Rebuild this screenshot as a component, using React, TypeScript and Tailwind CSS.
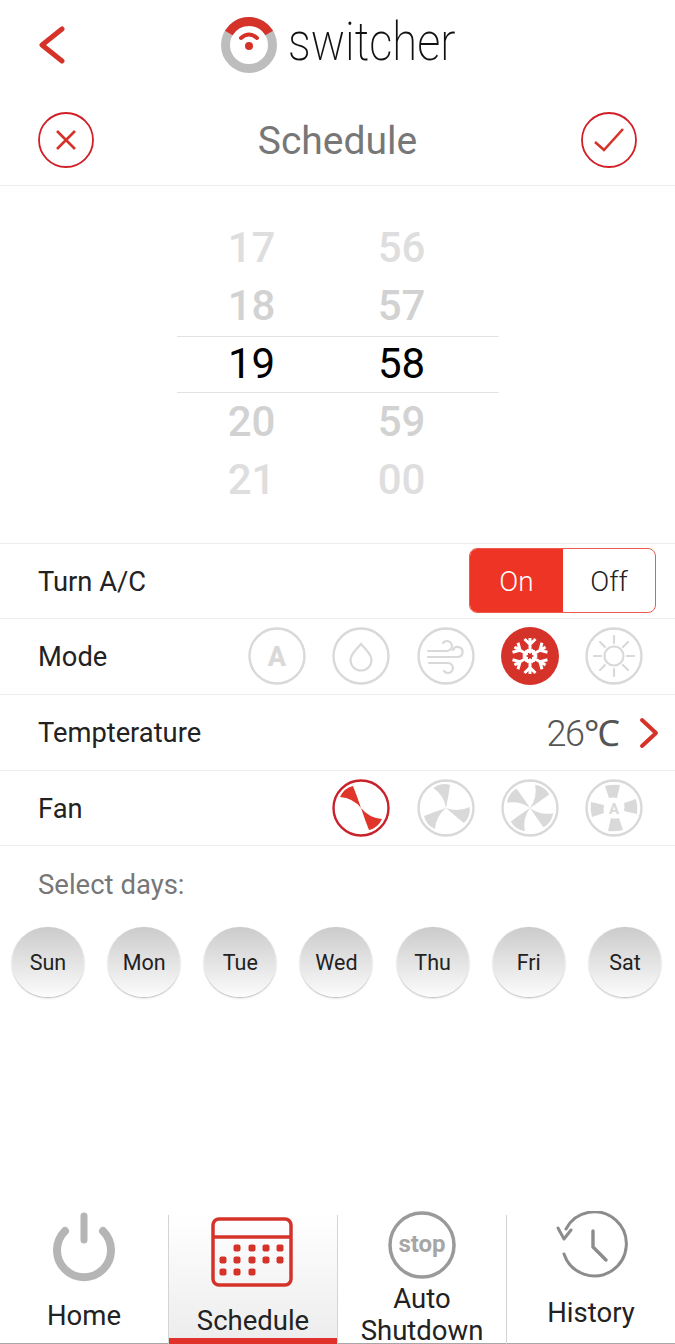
import React from "react";

const RED = "#d5332a";
const GREY = "#d9d9d9";

const blade = "M0 0 Q-4 -12 -8 -22 Q-17 -20 -21 -11 Q-8 -10 0 0Z";

function Circle({ children, stroke = GREY }: { children?: React.ReactNode; stroke?: string }) {
  return (
    <svg width="58" height="58" viewBox="0 0 58 58" fill="none">
      <circle cx="29" cy="29" r="27.5" stroke={stroke} strokeWidth="2.4" />
      {children}
    </svg>
  );
}

function Fan({ rotations, color = GREY, stroke = GREY }: { rotations: number[]; color?: string; stroke?: string }) {
  return (
    <Circle stroke={stroke}>
      <g transform="translate(29 29)" fill={color}>
        {rotations.map((r) => (
          <path key={r} d={blade} transform={`rotate(${r})`} />
        ))}
      </g>
    </Circle>
  );
}

function AutoFan() {
  return (
    <Circle>
      <g transform="translate(29 29)" fill={GREY}>
        {[0, 90, 180, 270].map((r) => (
          <path key={r} d="M-9 -22 Q-2 -24 6 -23 L3 -10 Q-1 -11 -5 -10Z" transform={`rotate(${r})`} />
        ))}
      </g>
      <text x="29" y="35" textAnchor="middle" fontFamily="Roboto" fontWeight="700" fontSize="15" fill={GREY}>A</text>
    </Circle>
  );
}

function Logo() {
  return (
    <svg width="56" height="56" viewBox="0 0 56 56" fill="none">
      <circle cx="28" cy="28" r="23.5" stroke="#bdbdbd" strokeWidth="9" />
      <path d="M7.8 16 A23.5 23.5 0 0 1 48.2 16" stroke="#d5332a" strokeWidth="9" />
      <path d="M20 21 Q28 14 36 21" stroke="#d5332a" strokeWidth="4" strokeLinecap="round" />
      <circle cx="28" cy="29" r="4" fill="#d5332a" />
    </svg>
  );
}

function BackChevron() {
  return (
    <svg width="27" height="38" viewBox="0 0 27 38" fill="none">
      <path d="M24 3 L4 19 L24 35" stroke="#d5332a" strokeWidth="5" strokeLinecap="round" strokeLinejoin="round" />
    </svg>
  );
}

function NextChevron() {
  return (
    <svg width="20" height="32" viewBox="0 0 20 32" fill="none">
      <path d="M3 3 L17 16 L3 29" stroke="#d5332a" strokeWidth="4" strokeLinecap="round" strokeLinejoin="round" />
    </svg>
  );
}

function Row({ label, children, height }: { label: string; children: React.ReactNode; height: string }) {
  return (
    <div className={`flex items-center justify-between border-b border-[#ececec] pl-[38px] ${height}`}>
      <span className="pt-[2px] text-[27.3px] text-[#222]">{label}</span>
      {children}
    </div>
  );
}

const hours = ["17", "18", "19", "20", "21"];
const mins = ["56", "57", "58", "59", "00"];
const days = ["Sun", "Mon", "Tue", "Wed", "Thu", "Fri", "Sat"];

export default function App() {
  return (
    <div className="flex h-[1344px] w-[675px] flex-col overflow-hidden bg-white font-['Roboto',sans-serif]">
      {/* brand bar */}
      <div className="grid h-[90px] grid-cols-[1fr_auto_1fr] items-center">
        <div className="pl-[38px]">
          <BackChevron />
        </div>
        <div className="flex items-center">
          <Logo />
          <span className="mb-[6px] ml-[11px] inline-block w-[167px] origin-left scale-x-[0.84] whitespace-nowrap text-[54px] font-extralight leading-none text-[#111]">
            switcher
          </span>
        </div>
        <div />
      </div>

      {/* title */}
      <div className="flex h-[96px] items-center justify-between border-b border-[#ececec] px-[38px] pt-[5px]">
        <svg width="56" height="56" viewBox="0 0 56 56" fill="none">
          <circle cx="28" cy="28" r="27" stroke="#d01f26" strokeWidth="1.8" />
          <path d="M19 19 L37 37 M37 19 L19 37" stroke="#d5332a" strokeWidth="2.6" />
        </svg>
        <span className="mt-[2px] text-[39px] text-[#777]">Schedule</span>
        <svg width="56" height="56" viewBox="0 0 56 56" fill="none">
          <circle cx="28" cy="28" r="27" stroke="#d01f26" strokeWidth="1.8" />
          <path d="M14 30 L23 38 L42 17" stroke="#d5332a" strokeWidth="2.6" />
        </svg>
      </div>

      {/* picker */}
      <div className="flex h-[358px] flex-col items-center border-b border-[#ececec] pt-[33px]">
        {hours.map((h, i) => (
          <div
            key={h}
            className={
              i === 2
                ? "mt-[1px] grid h-[57px] w-[322px] grid-cols-[150px_150px] items-center border-y border-[#e2e2e2] pb-[1px] text-[42px] font-[450] leading-none text-black"
                : `grid h-[58px] w-[322px] grid-cols-[150px_150px] items-center text-[42px] font-medium leading-none ${
                    i === 0 || i === 4 ? "text-[#dedede]" : "text-[#d2d2d2]"
                  }`
            }
          >
            <span className="text-center">{h}</span>
            <span className="text-center">{mins[i]}</span>
          </div>
        ))}
      </div>

      {/* settings */}
      <Row label="Turn A/C" height="h-[75px]">
        <div className="mb-[2px] mr-[19px] flex h-[65px] w-[187px] overflow-hidden rounded-[8px] border border-[#ee5a50]">
          <div className="flex w-[93px] items-center justify-center bg-[#ee3424] pt-[4px] text-[28px] font-light text-white">On</div>
          <div className="flex flex-1 items-center justify-center pt-[4px] text-[28px] font-light text-[#222]">Off</div>
        </div>
      </Row>
      <Row label="Mode" height="h-[76px]">
        <div className="mb-[2px] mr-[32px] flex gap-[26.25px]">
          <Circle>
            <text x="29" y="39" textAnchor="middle" fontFamily="Roboto" fontWeight="800" fontSize="27" fill={GREY}>A</text>
          </Circle>
          <Circle>
            <path d="M29 17 C24 23 18.5 27 18.5 33 A10.5 10.5 0 0 0 39.5 33 C39.5 27 34 23 29 17Z" stroke={GREY} strokeWidth="2.2" />
          </Circle>
          <Circle>
            <g stroke={GREY} strokeWidth="2.2" strokeLinecap="round">
              <path d="M11 24 H30 A5 5 0 1 0 26 16" />
              <path d="M11 30 H41 A5 5 0 1 0 36 23" />
              <path d="M12 36 H31 A5 5 0 1 1 27 44" />
            </g>
          </Circle>
          <svg width="58" height="58" viewBox="0 0 58 58" fill="none">
            <circle cx="29" cy="29" r="29" fill="#d5332a" />
            <g stroke="#fff" strokeWidth="3" transform="translate(29 29)">
              {[0, 60, 120, 180, 240, 300].map((r) => (
                <path key={r} d="M0 -4 V-18 M-5.5 -17 L0 -11.5 L5.5 -17 M-3.5 -6 L0 -4 L3.5 -6" transform={`rotate(${r})`} />
              ))}
            </g>
          </svg>
          <Circle>
            <circle cx="29" cy="29" r="9.5" stroke={GREY} strokeWidth="2.2" />
            <g stroke={GREY} strokeWidth="2.2" strokeLinecap="round">
              <path d="M29 9 V16 M29 42 V49 M9 29 H16 M42 29 H49 M15 15 L20 20 M38 38 L43 43 M15 43 L20 38 M38 20 L43 15" />
            </g>
          </Circle>
        </div>
      </Row>
      <Row label="Tempterature" height="h-[76px]">
        <div className="mr-[16px] flex items-center gap-[21px]">
          <span className="pt-[2px] text-[36px] font-light tracking-[-1.5px] text-[#555]">26℃</span>
          <NextChevron />
        </div>
      </Row>
      <Row label="Fan" height="h-[75px]">
        <div className="mr-[32px] flex gap-[26.25px]">
          <Fan rotations={[0, 180]} color="#e0352b" stroke="#c8232c" />
          <Fan rotations={[30, 150, 270]} />
          <Fan rotations={[75, 165, 255, 345]} />
          <AutoFan />
        </div>
      </Row>

      {/* days */}
      <div className="pl-[38px] pt-[24px] text-[27.5px] leading-[30px] text-[#777]">Select days:</div>
      <div className="mt-[27px] flex justify-between pl-[12px] pr-[14px]">
        {days.map((d) => (
          <div
            key={d}
            className="flex h-[70px] w-[72px] items-center justify-center rounded-full bg-gradient-to-b from-[#cbcbcb] to-[#fcfcfc] pt-[2px] text-[21.5px] text-[#222] shadow-[0_1px_2px_rgba(0,0,0,0.3)]"
          >
            {d}
          </div>
        ))}
      </div>

      <div className="flex-1" />

      {/* tabs */}
      <div className="grid h-[129px] shrink-0 grid-cols-[168px_169px_169px_1fr] border-b border-[#a8a8a8] text-[27.5px] leading-[32px] text-[#222]">
        <div className="flex flex-col items-center">
          <svg className="-mt-[5px]" width="72" height="72" viewBox="0 0 72 72" fill="none">
            <path d="M36 6 V30" stroke="#b5b5b5" strokeWidth="7" strokeLinecap="round" />
            <path d="M17 21 A27 27 0 1 0 55 21" stroke="#b5b5b5" strokeWidth="8" strokeLinecap="round" />
          </svg>
          <span className="mt-[18px]">Home</span>
        </div>
        <div className="flex flex-col items-center border-l border-[#d4d4d4] bg-gradient-to-b from-white to-[#ececec] pt-[2px] shadow-[inset_0_-6px_0_#e0322a]">
          <svg className="-ml-[3px]" width="82" height="70" viewBox="0 0 82 70" fill="none">
            <rect x="2" y="2" width="78" height="66" rx="6" stroke={RED} strokeWidth="3.5" />
            <path d="M2 20 H80" stroke={RED} strokeWidth="3.5" />
            <g fill={RED}>
              {[
                [26, 27.5], [41, 27.5], [55, 27.5], [69, 27.5],
                [12, 39.5], [26, 39.5], [41, 39.5], [55, 39.5], [69, 39.5],
                [12, 51.5], [26, 51.5], [41, 51.5],
              ].map(([x, y]) => (
                <rect key={`${x}-${y}`} x={x - 3.5} y={y} width="7" height="7" rx="2" />
              ))}
            </g>
          </svg>
          <span className="mt-[18px]">Schedule</span>
        </div>
        <div className="flex flex-col items-center border-l border-[#d4d4d4] text-center">
          <svg className="-mt-[5px]" width="70" height="70" viewBox="0 0 70 70" fill="none">
            <circle cx="35" cy="35" r="32" stroke="#9a9a9a" strokeWidth="3.5" />
            <text x="35" y="42" textAnchor="middle" fontFamily="Roboto" fontWeight="700" fontSize="24" fill="#a6a6a6">stop</text>
          </svg>
          <span className="mt-[3px]">Auto</span>
          <span className="mt-[3px] leading-[26px]">Shutdown</span>
        </div>
        <div className="flex flex-col items-center border-l border-[#d4d4d4]">
          <svg className="-mt-[4px] ml-[3px]" width="74" height="70" viewBox="0 0 74 70" fill="none">
            <path d="M10 18 A32 32 0 1 1 8 43" stroke="#8c8c8c" strokeWidth="3" strokeLinecap="round" />
            <path d="M2 17 L8 28 L15 19" stroke="#8c8c8c" strokeWidth="3" strokeLinecap="round" strokeLinejoin="round" />
            <path d="M37 20 V36 L50 49" stroke="#8c8c8c" strokeWidth="3.4" strokeLinecap="round" strokeLinejoin="round" />
          </svg>
          <span className="mt-[16px]">History</span>
        </div>
      </div>
    </div>
  );
}
